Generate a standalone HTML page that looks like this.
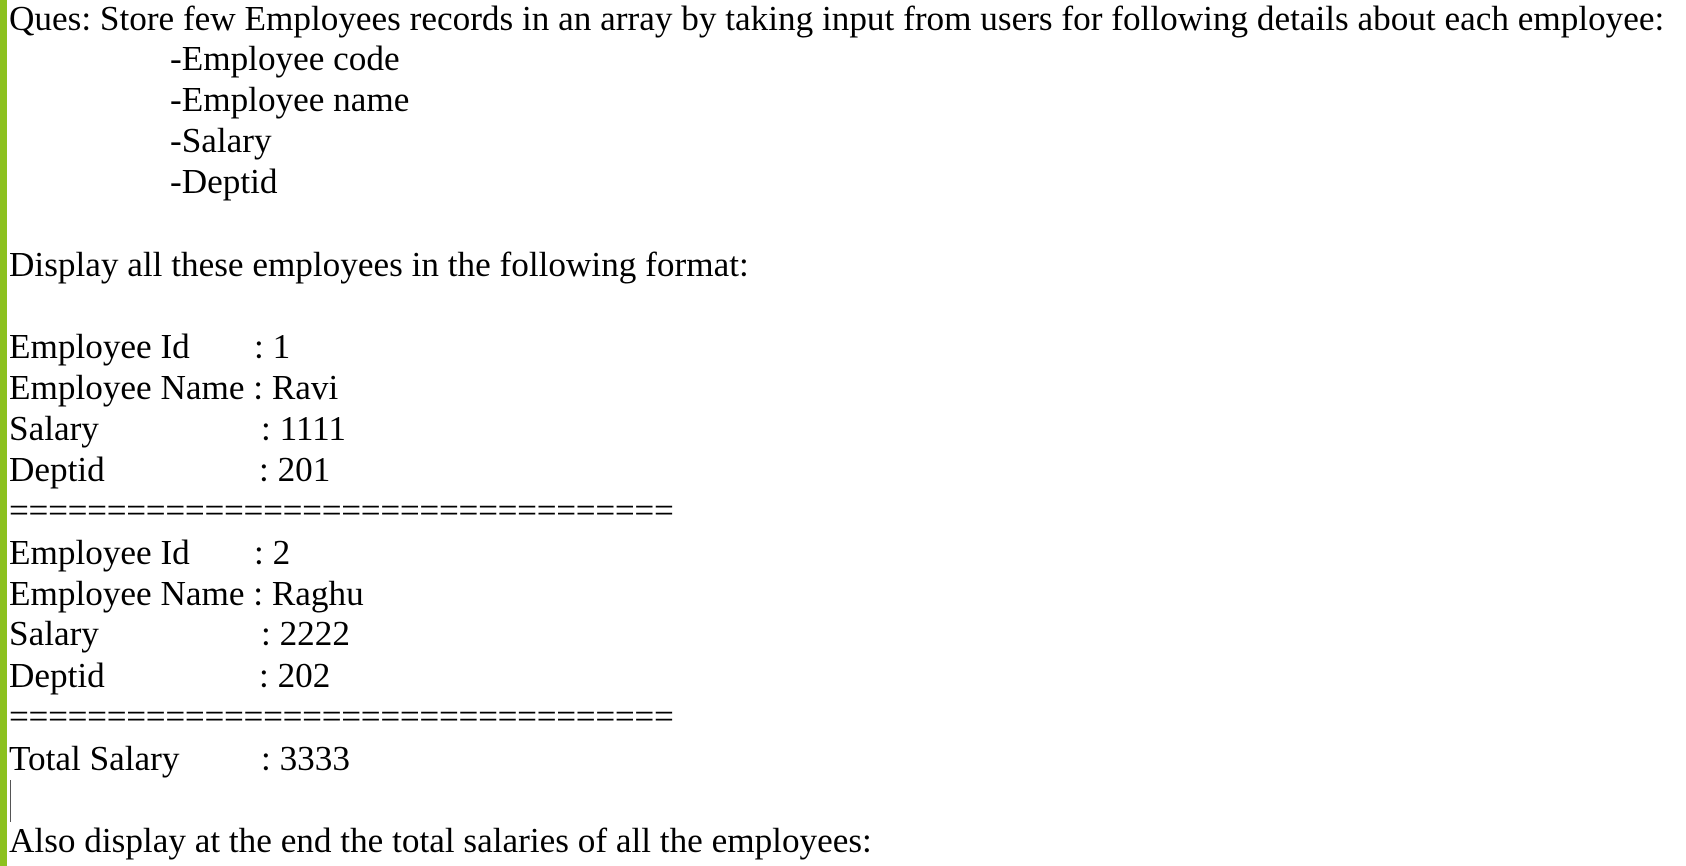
<!DOCTYPE html>
<html><head><meta charset="utf-8"><style>
html,body{margin:0;padding:0;background:#fff;width:1686px;height:866px;overflow:hidden;position:relative}
.bar{position:absolute;left:0;top:0;width:7px;height:866px;background:#8cc11f}
.t{position:absolute;font-family:"Liberation Serif",serif;font-size:35.2px;line-height:35px;color:#000;white-space:pre}
.eq{letter-spacing:-0.3px}
.cur{position:absolute;left:10px;top:780px;width:1px;height:42px;background:#555}
</style></head><body>
<div class="bar"></div>
<div class="t" style="left:9px;top:1px">Ques: Store few Employees records in an array by taking input from users for following details about each employee:</div>
<div class="t" style="left:170px;top:41px">-Employee code</div>
<div class="t" style="left:170px;top:82px">-Employee name</div>
<div class="t" style="left:170px;top:123px">-Salary</div>
<div class="t" style="left:170px;top:164px">-Deptid</div>
<div class="t" style="left:9px;top:247px">Display all these employees in the following format:</div>

<div class="t" style="left:9px;top:329px">Employee Id</div><div class="t" style="left:254px;top:329px">: 1</div>
<div class="t" style="left:9px;top:370px">Employee Name : Ravi</div>
<div class="t" style="left:9px;top:411px">Salary</div><div class="t" style="left:261px;top:411px">: 1111</div>
<div class="t" style="left:9px;top:452px">Deptid</div><div class="t" style="left:259px;top:452px">: 201</div>
<div class="t eq" style="left:9px;top:493px">==================================</div>

<div class="t" style="left:9px;top:535px">Employee Id</div><div class="t" style="left:254px;top:535px">: 2</div>
<div class="t" style="left:9px;top:576px">Employee Name : Raghu</div>
<div class="t" style="left:9px;top:616px">Salary</div><div class="t" style="left:261px;top:616px">: 2222</div>
<div class="t" style="left:9px;top:658px">Deptid</div><div class="t" style="left:259px;top:658px">: 202</div>
<div class="t eq" style="left:9px;top:699px">==================================</div>

<div class="t" style="left:9px;top:741px">Total Salary</div><div class="t" style="left:261px;top:741px">: 3333</div>
<div class="cur"></div>
<div class="t" style="left:9px;top:823px">Also display at the end the total salaries of all the employees:</div>
</body></html>
